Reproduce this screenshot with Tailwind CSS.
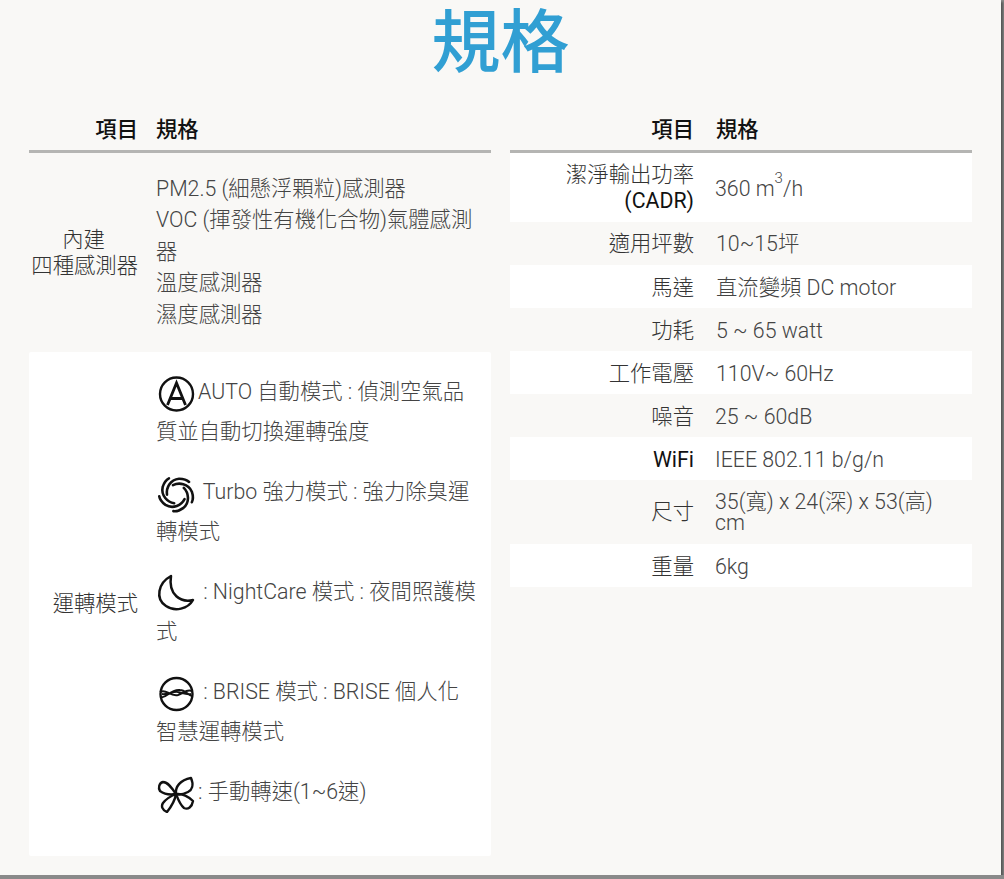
<!DOCTYPE html>
<html lang="zh-Hant">
<head>
<meta charset="utf-8">
<script src="https://cdn.jsdelivr.net/npm/@tailwindcss/browser@4"></script>
</head>
<body class="bg-[#8a8a8a] overflow-hidden">
<div class="w-[1001px] h-[875px] bg-[#f9f8f6] shadow-[2px_2px_2px_#555] font-['Roboto','Noto_Sans_CJK_TC',sans-serif] font-light text-[21.33px] text-[#444]">
  <h1 class="h-[90px] text-center text-[69px] leading-[88px] font-medium text-[#319fd3]">規格</h1>
  <div class="flex gap-[19px] pl-[29px]">
    <section class="w-[462px]">
      <div class="flex h-[63px] items-center border-b-[3px] border-[#b5b5b3] pt-[19px] text-[#111] font-medium">
        <div class="w-[109px] text-right">項目</div><div class="pl-[18px]">規格</div>
      </div>
      <div class="flex h-[199px] items-center">
        <div class="w-[109px] text-right leading-[26px] text-[#333]"><div class="text-center">內建</div>四種感測器</div>
        <div class="pl-[18px] w-[345px] leading-[31.6px] pb-[2px]">PM2.5 (細懸浮顆粒)感測器<br>VOC (揮發性有機化合物)氣體感測器<br>溫度感測器<br>濕度感測器</div>
      </div>
      <div class="flex h-[504px] items-center bg-white rounded-[2px]">
        <div class="w-[109px] text-right text-[#333]">運轉模式</div>
        <div class="pl-[18px] w-[339px] self-start pt-[20px] leading-[40px]">
          <p class="mb-[20px]"><svg class="inline-block align-middle -my-2 mr-[2px]" width="40" height="40" viewBox="0 0 40 40" fill="none" stroke="#111" stroke-width="2.4"><circle cx="20.500" cy="21" r="16.500"/><path d="M11.500 32 20.500 10l9 22M14.500 25.500h12" stroke-width="2.800"/></svg>AUTO 自動模式 : 偵測空氣品質並自動切換運轉強度</p>
          <p class="mb-[20px]"><svg class="inline-block align-middle -my-2 mr-[2px]" width="40" height="40" viewBox="0 0 40 40" fill="none" stroke="#111" stroke-width="2.200" stroke-linecap="round"><g transform="translate(20.500 21) scale(1.180) translate(-20 -20)"><path d="M17 12.500C22 10 30 11 33 18C34 21 34 25 33 27"/><path d="M17 12.500C22 10 30 11 33 18C34 21 34 25 33 27" transform="rotate(72 20 20)"/><path d="M17 12.500C22 10 30 11 33 18C34 21 34 25 33 27" transform="rotate(144 20 20)"/><path d="M17 12.500C22 10 30 11 33 18C34 21 34 25 33 27" transform="rotate(216 20 20)"/><path d="M17 12.500C22 10 30 11 33 18C34 21 34 25 33 27" transform="rotate(288 20 20)"/></g></svg> Turbo 強力模式 : 強力除臭運轉模式</p>
          <p class="mb-[20px]"><svg class="inline-block align-middle -my-2 mr-[2px]" width="40" height="40" viewBox="0 0 40 40" fill="none" stroke="#111" stroke-width="2.500" stroke-linejoin="round"><path d="M15 3C2 10-1 26 10 33C19 39 32 36 37 27C25 30 12 22 15 3Z"/></svg> : NightCare 模式 : 夜間照護模式</p>
          <p class="mb-[20px]"><svg class="inline-block align-middle -my-2 mr-[2px]" width="40" height="40" viewBox="0 0 40 40" fill="none" stroke="#111" stroke-width="2.400"><circle cx="20.500" cy="21" r="16"/><path d="M4 19C10 15 14 24 22 22C28 20 30 16 36 18M5 24C10 26 14 16 24 17C29 17 32 22 36 23M6 21C12 22 17 18 22 19C27 20 30 22 35 21" stroke-width="2"/></svg> : BRISE 模式 : BRISE 個人化智慧運轉模式</p>
          <p><svg class="inline-block align-middle -my-2 mr-[2px]" width="40" height="40" viewBox="0 0 40 40" fill="none" stroke="#111" stroke-width="2.400" stroke-linejoin="round"><path d="M20 21C16 15 12 9 7 9C3 10 2 15 4 18C8 21 14 22 20 21Z"/><path d="M20 21C19 14 24 7 35 5C38 12 36 17 32 19C28 21 23 22 20 21Z"/><path d="M20 21C26 20 33 24 37 28C36 34 32 37 28 35C24 32 22 26 20 21Z"/><path d="M20 21C19 27 15 34 11 39C6 37 5 33 7 30C10 26 15 23 20 21Z"/></svg>: 手動轉速(1~6速)</p>
        </div>
      </div>
    </section>
    <section class="w-[462px]">
      <div class="flex h-[63px] items-center border-b-[3px] border-[#b5b5b3] pt-[19px] text-[#111] font-medium">
        <div class="w-[184px] text-right">項目</div><div class="pl-[22px]">規格</div>
      </div>
      <div class="flex h-[69px] items-center bg-white">
        <div class="w-[184px] text-right leading-[26px] text-[#333]">潔淨輸出功率<br><span class="font-normal text-[#111]">(CADR)</span></div>
        <div class="pl-[21px] pt-[2px]">360 m<sup class="text-[15px] align-[5px] leading-none">3</sup>/h</div>
      </div>
      <div class="flex h-[43px] items-center pt-[1px]">
        <div class="w-[184px] text-right text-[#333]">適用坪數</div><div class="pl-[22px]">10~15坪</div>
      </div>
      <div class="flex h-[43px] items-center bg-white pt-[2px]">
        <div class="w-[184px] text-right text-[#333]">馬達</div><div class="pl-[22px]">直流變頻 DC motor</div>
      </div>
      <div class="flex h-[43px] items-center pt-[2px]">
        <div class="w-[184px] text-right text-[#333]">功耗</div><div class="pl-[22px]">5 ~ 65 watt</div>
      </div>
      <div class="flex h-[43px] items-center bg-white pt-[2px]">
        <div class="w-[184px] text-right text-[#333]">工作電壓</div><div class="pl-[22px]">110V~ 60Hz</div>
      </div>
      <div class="flex h-[43px] items-center pt-[2px]">
        <div class="w-[184px] text-right text-[#333]">噪音</div><div class="pl-[21px]">25 ~ 60dB</div>
      </div>
      <div class="flex h-[43px] items-center bg-white pt-[2px]">
        <div class="w-[184px] text-right font-normal text-[#111]">WiFi</div><div class="pl-[21px]">IEEE 802.11 b/g/n</div>
      </div>
      <div class="flex h-[64px] items-center">
        <div class="w-[184px] text-right text-[#333]">尺寸</div><div class="pl-[21px] w-[270px] leading-[21.5px]">35(寬) x 24(深) x 53(高) cm</div>
      </div>
      <div class="flex h-[43px] items-center bg-white pt-[2px]">
        <div class="w-[184px] text-right text-[#333]">重量</div><div class="pl-[21px]">6kg</div>
      </div>
    </section>
  </div>
</div>
</body>
</html>
